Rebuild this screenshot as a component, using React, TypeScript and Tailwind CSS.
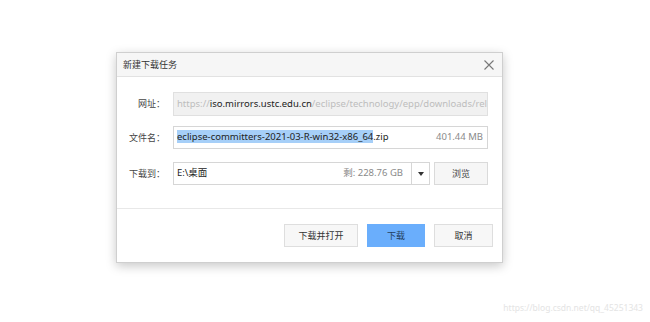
import React from "react";

const font = { fontFamily: '"Noto Sans", "Noto Sans CJK SC", sans-serif' };

function Label({ text }: { text: string }) {
  return (
    <div className="w-[49px] shrink-0 text-right text-[9px] text-[#444] pr-[1px]">{text}</div>
  );
}

export default function App() {
  return (
    <div
      className="relative w-[650px] h-[322px] bg-white overflow-hidden"
      style={font}
    >
      {/* Dialog */}
      <div className="ml-[116px] mt-[52px] w-[387px] h-[211px] bg-white border border-[#cfcfcf] shadow-[0_3px_10px_rgba(0,0,0,0.22)] flex flex-col">
        {/* Title bar */}
        <div className="h-[24px] bg-[#f6f6f6] border-b border-[#e2e2e2] flex items-center justify-between pl-[6px] pr-[7px]">
          <span className="text-[9px] text-[#333]">新建下载任务</span>
          <svg width="12" height="12" viewBox="0 0 12 12" className="text-[#777]">
            <path d="M1.5 1.5 L10.5 10.5 M10.5 1.5 L1.5 10.5" stroke="currentColor" strokeWidth="1.1" />
          </svg>
        </div>

        {/* Body */}
        <div className="h-[132px] border-b border-[#e8e8e8] pt-[15px] pr-[14px] flex flex-col">
          {/* URL row */}
          <div className="flex items-center h-[24px]">
            <Label text="网址：" />
            <div className="ml-[7px] w-[315px] h-[24px] bg-[#f1f1f1] border border-[#e0e0e0] flex items-center px-[3px] overflow-hidden whitespace-nowrap text-[9.5px]">
              <span className="text-[#bdbdbd]">https://</span>
              <span className="text-[#222]">iso.mirrors.ustc.edu.cn</span>
              <span className="text-[#bdbdbd]">/eclipse/technology/epp/downloads/rele</span>
            </div>
          </div>

          {/* File name row */}
          <div className="flex items-center h-[23px] mt-[10px]">
            <Label text="文件名：" />
            <div className="ml-[7px] w-[315px] h-[23px] bg-white border border-[#d6d6d6] flex items-center justify-between px-[3px] whitespace-nowrap text-[9.5px]">
              <span className="text-[#222]">
                <span className="bg-[#a6cff8]">eclipse-committers-2021-03-R-win32-x86_64</span>.zip
              </span>
              <span className="text-[#8a8a8a] pr-[1px]">401.44 MB</span>
            </div>
          </div>

          {/* Save path row */}
          <div className="flex items-center h-[23px] mt-[13px]">
            <Label text="下载到：" />
            <div className="ml-[7px] flex h-[23px]">
              <div className="w-[239px] border border-[#d6d6d6] flex items-center justify-between px-[3px] whitespace-nowrap text-[9.5px]">
                <span className="text-[#222]">E:\桌面</span>
                <span className="text-[#8a8a8a] pr-[5px]">剩: 228.76 GB</span>
              </div>
              <div className="w-[18px] border border-l-0 border-[#d6d6d6] flex items-center justify-center">
                <svg width="6" height="4" viewBox="0 0 6 4">
                  <path d="M0 0 L6 0 L3 4 Z" fill="#333" />
                </svg>
              </div>
              <button className="ml-[4px] w-[54px] h-[23px] bg-[#f6f6f6] border border-[#dadada] text-[9px] text-[#444]">
                浏览
              </button>
            </div>
          </div>
        </div>

        {/* Footer */}
        <div className="flex-1 flex items-start justify-end pt-[15px] pr-[9px] gap-[9px]">
          <button className="w-[74px] h-[23px] bg-[#f7f7f7] border border-[#dedede] text-[9px] text-[#333]">
            下载并打开
          </button>
          <button className="w-[58px] h-[23px] bg-[#6aaefc] border border-[#6aaefc] text-[9px] text-[#24405f]">
            下载
          </button>
          <button className="w-[59px] h-[23px] bg-[#f7f7f7] border border-[#dedede] text-[9px] text-[#333]">
            取消
          </button>
        </div>
      </div>

      {/* Watermark */}
      <div className="absolute right-[7px] top-[302px] text-[8.5px] text-[#e4e4e4]">
        https://blog.csdn.net/qq_45251343
      </div>
    </div>
  );
}
